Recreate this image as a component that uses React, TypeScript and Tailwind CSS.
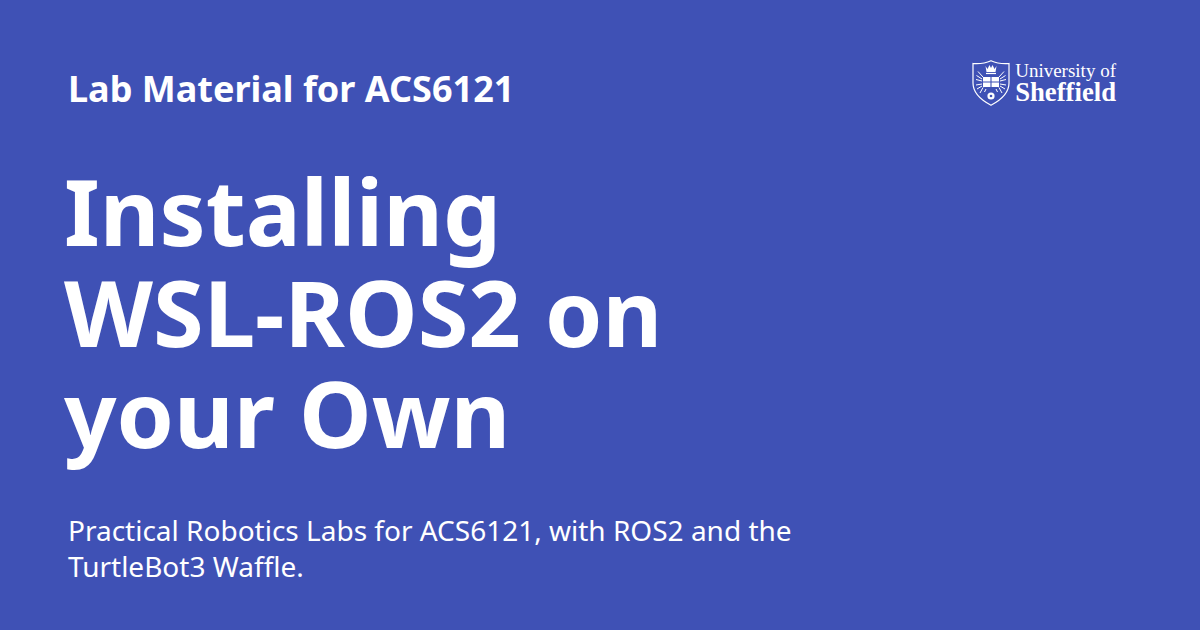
function Crest() {
  return (
    <svg width="38" height="46" viewBox="0 0 38 46" fill="none" className="shrink-0">
      {/* shield outline */}
      <path d="M1 3.5 C8 4 14 3 19 .7 C24 3 30 4 37 3.5 V23 C37 33 29 40 19 45.2 C9 40 1 33 1 23 Z" stroke="white" strokeWidth="1.2" />
      {/* crown */}
      <path d="M13.5 6 L15.5 9 L17.5 5 L19 8 L20.5 5 L22.5 9 L24.5 6 L23.5 12 H14.5 Z" fill="white" />
      <path d="M14 13.5 H24" stroke="white" strokeWidth="1.2" />
      {/* rays */}
      <g stroke="white" strokeWidth="1">
        <path d="M11 17 L6 11.5" />
        <path d="M10 19 L4.5 15.5" />
        <path d="M10 21 L4 19.5" />
        <path d="M27 17 L32 11.5" />
        <path d="M28 19 L33.5 15.5" />
        <path d="M28 21 L34 19.5" />
        <path d="M10 24 L4 25" />
        <path d="M10 26 L5 29" />
        <path d="M11 27.5 L8 33" />
        <path d="M28 24 L34 25" />
        <path d="M28 26 L33 29" />
        <path d="M27 27.5 L30 33" />
        <path d="M14 29 L12.5 32" />
        <path d="M24 29 L25.5 32" />
      </g>
      {/* open book */}
      <path d="M11 17 H27 V27 H11 Z" fill="white" />
      <path d="M19 17 V27 M11 22 H27" stroke="#3f51b5" strokeWidth="1.1" />
      {/* rose */}
      <circle cx="19" cy="36" r="3.6" fill="white" />
      <circle cx="19" cy="36" r="1.3" fill="#3f51b5" />
    </svg>
  );
}

export default function App() {
  return (
    <div className="w-[1200px] h-[630px] bg-[#3f51b5] text-white font-['Noto_Sans',sans-serif] flex flex-col pl-[69px] pr-[84px] overflow-hidden">
      <div className="flex items-start justify-between pt-[60px]">
        <p className="text-[36px] font-bold leading-[58px] -ml-[1px]">Lab Material for ACS6121</p>
        <div className="flex items-center gap-[5px]">
          <Crest />
          <div className="font-['Liberation_Serif',serif] flex flex-col">
            <span className="text-[19px] leading-[19px] whitespace-nowrap">University of</span>
            <span className="text-[26.7px] leading-[25px] font-bold whitespace-nowrap">Sheffield</span>
          </div>
        </div>
      </div>
      <h1 className="text-[92px] font-bold leading-[101px] -ml-[5px] mt-[42px] w-[620px]">Installing WSL-ROS2 on your Own</h1>
      <p className="text-[28px] leading-[36px] w-[800px] mt-[49px] -ml-[1px]">Practical Robotics Labs for ACS6121, with ROS2 and the TurtleBot3 Waffle.</p>
    </div>
  );
}
